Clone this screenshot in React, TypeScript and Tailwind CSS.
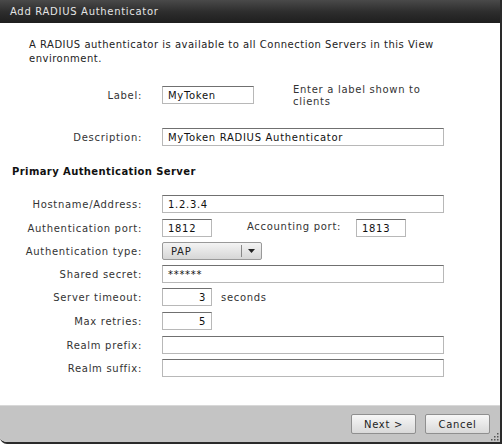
import React from 'react';

const font = { fontFamily: '"DejaVu Sans", Verdana, sans-serif' };

const Field = ({ value = '', w, right = false }: { value?: string; w: string; right?: boolean }) => (
  <div
    className={`${w} h-[18px] border border-[#b8b8b8] border-t-[#707070] bg-white flex items-center px-[5px] text-[10px] text-[#111] ${right ? 'justify-end' : ''}`}
  >
    {value}
  </div>
);

const Row = ({ label, className = '', children }: { label: string; className?: string; children: React.ReactNode }) => (
  <div className={`flex items-center h-[18px] ${className}`}>
    <div className="w-[143px] text-right text-[10px] text-[#333] pr-[1px]">{label}</div>
    <div className="ml-[19px] flex items-center">{children}</div>
  </div>
);

const Button = ({ children }: { children: React.ReactNode }) => (
  <button className="w-[65px] h-[20px] rounded-[2px] border border-[#8f8f8f] bg-gradient-to-b from-[#f7f7f7] to-[#d9d9d9] text-[10px] text-[#222] tracking-[0.7px]">
    {children}
  </button>
);

export default function App() {
  return (
    <div className="w-[504px] h-[446px] bg-white tracking-[0.7px]" style={font}>
      <div className="w-[502px] h-[444px] flex flex-col border-r-2 border-b-2 border-[#2a2a2a] rounded-bl-[7px] overflow-hidden">
        {/* title bar */}
        <div className="h-[23px] flex items-center pl-[10px] bg-gradient-to-b from-[#4a4a4a] via-[#2e2e2e] to-[#1e1e1e] text-[10px] text-[#e4e4e4]">
          Add RADIUS Authenticator
        </div>

        <div className="flex-1 flex flex-col bg-white">
          <p className="mt-[15px] pl-[29px] pr-[20px] text-[10px] leading-[14px] text-[#222] tracking-[0.5px]">
            A RADIUS authenticator is available to all Connection Servers in this View
            <br />
            environment.
          </p>

          <Row label="Label:" className="mt-[20px]">
            <Field value="MyToken" w="w-[92px]" />
            <div className="ml-[39px] w-[140px] text-[10px] leading-[12px] text-[#333] mt-[2px]">
              Enter a label shown to clients
            </div>
          </Row>

          <Row label="Description:" className="mt-[24px]">
            <Field value="MyToken RADIUS Authenticator" w="w-[282px]" />
          </Row>

          <div className="mt-[18px] pl-[12px] text-[10px] font-bold text-[#111] tracking-[0.4px]">Primary Authentication Server</div>

          <Row label="Hostname/Address:" className="mt-[16px]">
            <Field value="1.2.3.4" w="w-[282px]" />
          </Row>

          <Row label="Authentication port:" className="mt-[6px]">
            <Field value="1812" w="w-[50px]" />
            <div className="ml-[35px] w-[109px] text-[10px] text-[#333] -mt-[3px]">Accounting port:</div>
            <Field value="1813" w="w-[50px]" />
          </Row>

          <Row label="Authentication type:" className="mt-[5px]">
            <div className="w-[100px] h-[18px] flex items-center rounded-[2px] border border-[#999] bg-gradient-to-b from-[#f4f4f4] to-[#d6d6d6] text-[10px] text-[#222]">
              <span className="flex-1 pl-[8px]">PAP</span>
              <span className="w-px h-[12px] bg-[#888]" />
              <span className="w-[19px] flex justify-center">
                <svg width="7" height="4" viewBox="0 0 7 4"><path d="M0 0h7L3.5 4z" fill="#222" /></svg>
              </span>
            </div>
          </Row>

          <Row label="Shared secret:" className="mt-[5px]">
            <Field value="******" w="w-[282px]" />
          </Row>

          <Row label="Server timeout:" className="mt-[5px]">
            <Field value="3" w="w-[50px]" right />
            <span className="ml-[9px] text-[10px] text-[#333]">seconds</span>
          </Row>

          <Row label="Max retries:" className="mt-[6px]">
            <Field value="5" w="w-[50px]" right />
          </Row>

          <Row label="Realm prefix:" className="mt-[6px]">
            <Field w="w-[282px]" />
          </Row>

          <Row label="Realm suffix:" className="mt-[5px]">
            <Field w="w-[282px]" />
          </Row>
        </div>

        {/* footer */}
        <div className="relative h-[37px] flex items-center justify-end gap-[9px] pr-[10px] bg-[#c4c4c4] border-t border-[#d8d8d8]">
          <Button>Next &gt;</Button>
          <Button>Cancel</Button>
          <svg className="absolute right-[1px] bottom-[1px]" width="9" height="9" viewBox="0 0 9 9" fill="#555">
            <rect x="7" y="1" width="1.5" height="1.5" />
            <rect x="4" y="4" width="1.5" height="1.5" />
            <rect x="7" y="4" width="1.5" height="1.5" />
            <rect x="1" y="7" width="1.5" height="1.5" />
            <rect x="4" y="7" width="1.5" height="1.5" />
            <rect x="7" y="7" width="1.5" height="1.5" />
          </svg>
        </div>
      </div>
    </div>
  );
}
